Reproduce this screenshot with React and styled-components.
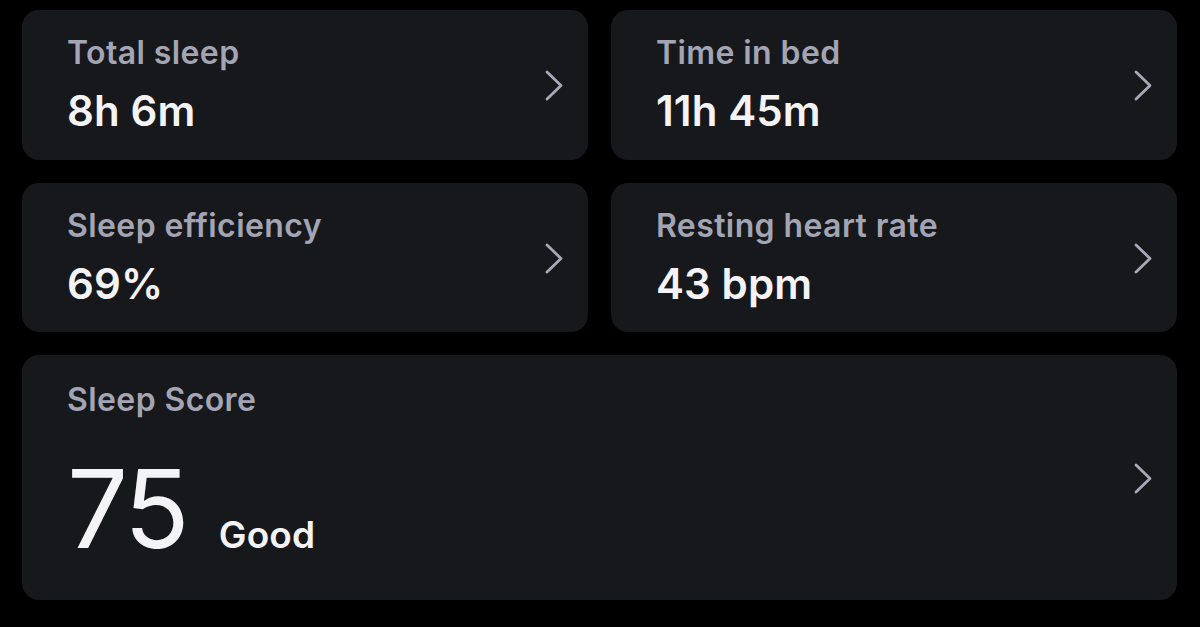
import styled, { createGlobalStyle } from "styled-components";

const GlobalStyle = createGlobalStyle`
    html, body {
        margin: 0;
        padding: 0;
        background: #000;
    }
    body {
        font-family: Inter, "Noto Sans", "Liberation Sans", sans-serif;
        -webkit-font-smoothing: antialiased;
    }
`

const Page = styled.div`
    width: 1200px;
    height: 627px;
    box-sizing: border-box;
    padding: 10px 23px 0 22px;
    display: grid;
    grid-template-columns: 566px 566px;
    grid-template-rows: 150px 149px 245px;
    column-gap: 23px;
    row-gap: 23px;
`

const Card = styled.div`
    grid-column: ${(p) => (p.$wide ? "1 / span 2" : "auto")};
    background: #17181c;
    border-radius: 17px;
    display: flex;
    align-items: center;
    padding: ${(p) => (p.$wide ? "26px" : "24px")} 25px 0 45px;
    box-sizing: border-box;
    position: relative;
`

const Body = styled.div`
    flex: 1;
    align-self: flex-start;
    display: flex;
    flex-direction: column;
`

const Label = styled.div`
    color: #a3a5b4;
    font-size: 32px;
    font-weight: 600;
    line-height: 38px;
    letter-spacing: 0.4px;
`

const Value = styled.div`
    color: #f4f4f6;
    font-size: 42px;
    font-weight: 600;
    line-height: 48px;
    margin-top: 15px;
    letter-spacing: 0.1px;
`

const ScoreRow = styled.div`
    display: flex;
    align-items: baseline;
    margin-top: 35px;
    color: #f4f4f6;
`

const Score = styled.span`
    font-size: 108px;
    font-weight: 400;
    line-height: 110px;
    letter-spacing: -3px;
`

const Rating = styled.span`
    font-size: 37px;
    font-weight: 600;
    margin-left: 32px;
    letter-spacing: 0.2px;
`

const Chevron = styled.svg`
    position: absolute;
    right: 25px;
    top: 50%;
    width: 18px;
    height: 31px;
    margin-top: -15px;
`

function Arrow() {
    return (
        <Chevron viewBox="0 0 18 31" fill="none">
            <path d="M2 2 L16 15.5 L2 29" stroke="#a7a9b6" strokeWidth="2.8" strokeLinecap="round" strokeLinejoin="round" />
        </Chevron>
    )
}

const stats = [
    { label: "Total sleep", value: "8h 6m" },
    { label: "Time in bed", value: "11h 45m" },
    { label: "Sleep efficiency", value: "69%" },
    { label: "Resting heart rate", value: "43 bpm" },
]

export default function App() {
    return (
        <>
            <GlobalStyle />
            <Page>
                {stats.map((s) => (
                    <Card key={s.label}>
                        <Body>
                            <Label>{s.label}</Label>
                            <Value>{s.value}</Value>
                        </Body>
                        <Arrow />
                    </Card>
                ))}
                <Card $wide>
                    <Body>
                        <Label>Sleep Score</Label>
                        <ScoreRow>
                            <Score>75</Score>
                            <Rating>Good</Rating>
                        </ScoreRow>
                    </Body>
                    <Arrow />
                </Card>
            </Page>
        </>
    )
}
